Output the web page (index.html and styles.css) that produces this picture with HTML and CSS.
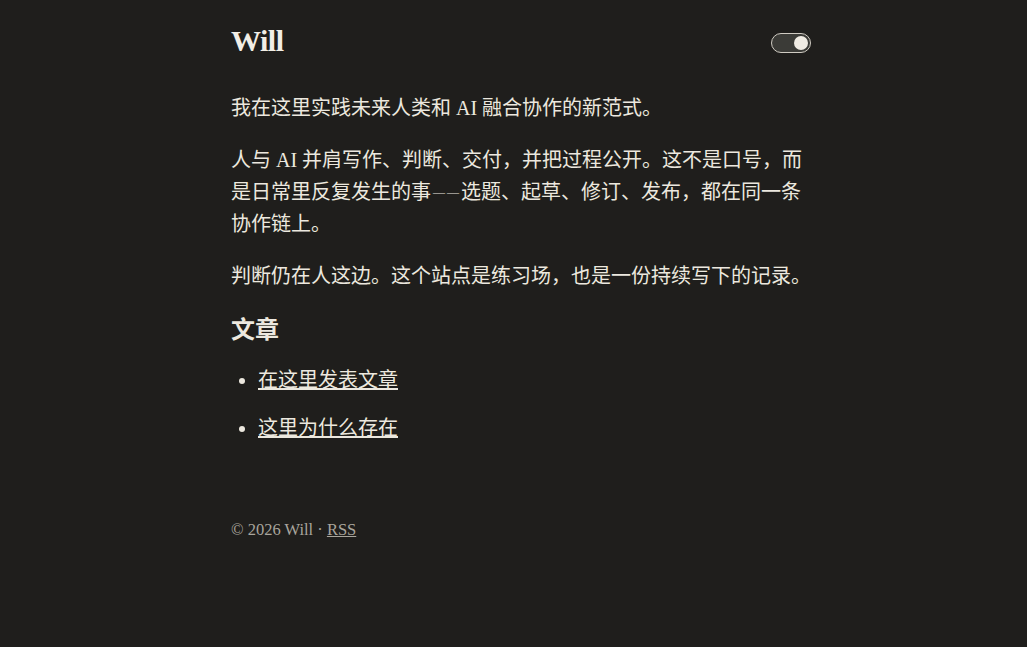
FILE: index.html
```html
<!DOCTYPE html>
<html lang="zh">
<head>
<meta charset="utf-8">
<title>Will</title>
<link rel="stylesheet" href="styles.css">
</head>
<body>
<div class="page">
  <header class="site-header">
    <a class="brand" href="#">Will</a>
    <button class="toggle" aria-label="切换主题"><span class="knob"></span></button>
  </header>
  <main class="content">
    <p>我在这里实践未来人类和 AI 融合协作的新范式。</p>
    <p>人与 AI 并肩写作、判断、交付，并把过程公开。这不是口号，而是日常里反复发生的事<span class="dash">——</span>选题、起草、修订、发布，都在同一条协作链上。</p>
    <p>判断仍在人这边。这个站点是练习场，也是一份持续写下的记录。</p>
    <h2>文章</h2>
    <ul class="posts">
      <li><a href="#">在这里发表文章</a></li>
      <li><a href="#">这里为什么存在</a></li>
    </ul>
  </main>
  <footer class="site-footer">© 2026 Will · <a href="#">RSS</a></footer>
</div>
</body>
</html>
```
FILE: styles.css
```css
html, body {
  margin: 0;
  padding: 0;
  background: #1f1e1c;
}
body {
  color: #ece8df;
  font-family: "Liberation Serif", "Noto Sans CJK SC", serif;
  font-size: 20px;
  line-height: 1.6;
}
.page {
  width: 580px;
  margin: 0 auto;
  padding-left: 15px;
}
.site-header {
  display: flex;
  justify-content: space-between;
  align-items: center;
  height: 82px;
  margin-bottom: 10px;
}
.brand {
  color: #f2eee6;
  text-decoration: none;
  font-weight: bold;
  font-size: 30px;
  letter-spacing: -0.5px;
}
.toggle {
  width: 40px;
  height: 20px;
  margin-top: 4px;
  border: 1.5px solid #cfcbc2;
  border-radius: 10px;
  background: #3b3b37;
  padding: 0 2px 0 0;
  display: flex;
  align-items: center;
  justify-content: flex-end;
  box-sizing: border-box;
}
.knob {
  width: 14px;
  height: 14px;
  border-radius: 50%;
  background: #f0ece4;
}
.content p {
  margin: 0 0 20px;
}
.dash {
  font-size: 12px;
  letter-spacing: 2px;
  padding-left: 2px;
  vertical-align: 3px;
}
.content h2 {
  font-size: 24px;
  font-weight: 600;
  margin: 0 0 16px;
  line-height: 1.5;
}
.posts {
  margin: 0;
  padding-left: 27px;
}
.posts li {
  margin-bottom: 16px;
}
.posts a {
  color: #ece8df;
}
.site-footer {
  margin-top: 73px;
  font-size: 16.5px;
  color: #a9a59c;
}
.site-footer a {
  color: #a9a59c;
}
```
